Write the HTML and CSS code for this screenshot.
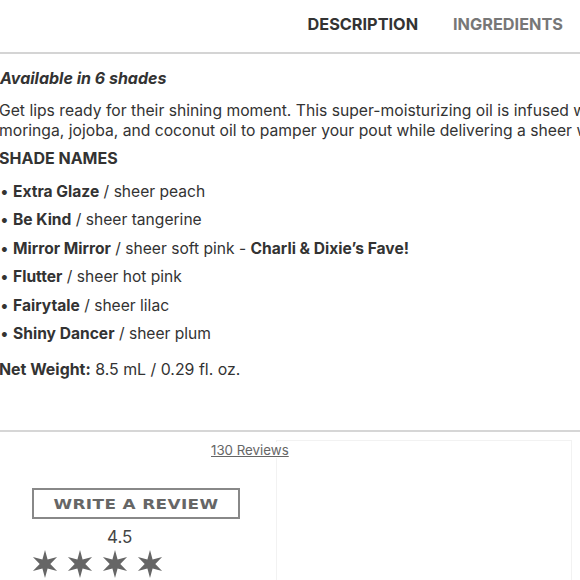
FILE: index.html
```html
<!DOCTYPE html>
<html>
<head>
<meta charset="utf-8">
<link rel="stylesheet" href="styles.css">
</head>
<body>
<nav class="tabs">
  <span class="tab active">DESCRIPTION</span>
  <span class="tab">INGREDIENTS</span>
</nav>
<section class="desc">
  <h2 class="avail">Available in 6 shades</h2>
  <p class="intro">Get lips ready for their shining moment. This super-moisturizing oil is infused with<br>moringa, jojoba, and coconut oil to pamper your pout while delivering a sheer wash of color.</p>
  <h3 class="shades">SHADE NAMES</h3>
  <ul class="list">
    <li><b>Extra Glaze</b> / sheer peach</li>
    <li><b>Be Kind</b> / sheer tangerine</li>
    <li><b>Mirror Mirror</b> / sheer soft pink - <b>Charli &amp; Dixie’s Fave!</b></li>
    <li><b>Flutter</b> / sheer hot pink</li>
    <li><b>Fairytale</b> / sheer lilac</li>
    <li><b>Shiny Dancer</b> / sheer plum</li>
  </ul>
  <p class="weight"><b>Net Weight:</b> 8.5 mL / 0.29 fl. oz.</p>
</section>
<section class="reviews">
  <div class="left">
    <div class="count"><a>130 Reviews</a></div>
    <button class="write"><span>WRITE A REVIEW</span></button>
    <div class="score">4.5</div>
    <div class="stars">
      <svg viewBox="0 0 28 28"><polygon points="14,0 16.6,9.5 26.1,7 19.3,14 26.1,21 16.6,18.5 14,28 11.4,18.5 1.9,21 8.7,14 1.9,7 11.4,9.5"/></svg>
      <svg viewBox="0 0 28 28"><polygon points="14,0 16.6,9.5 26.1,7 19.3,14 26.1,21 16.6,18.5 14,28 11.4,18.5 1.9,21 8.7,14 1.9,7 11.4,9.5"/></svg>
      <svg viewBox="0 0 28 28"><polygon points="14,0 16.6,9.5 26.1,7 19.3,14 26.1,21 16.6,18.5 14,28 11.4,18.5 1.9,21 8.7,14 1.9,7 11.4,9.5"/></svg>
      <svg viewBox="0 0 28 28"><polygon points="14,0 16.6,9.5 26.1,7 19.3,14 26.1,21 16.6,18.5 14,28 11.4,18.5 1.9,21 8.7,14 1.9,7 11.4,9.5"/></svg>
    </div>
  </div>
  <div class="right"></div>
</section>
</body>
</html>
```
FILE: styles.css
```css
html, body {
  margin: 0;
  padding: 0;
  background: #fff;
  overflow: hidden;
  width: 580px;
  height: 580px;
}
body {
  font-family: Inter, "Liberation Sans", sans-serif;
  color: #333;
}
.tabs {
  display: flex;
  justify-content: flex-end;
  align-items: center;
  gap: 35px;
  padding-right: 17px;
  padding-bottom: 4px;
  height: 54px;
  box-sizing: border-box;
  border-bottom: 2px solid #d4d4d4;
}
.tab {
  font-size: 16.3px;
  font-weight: 700;
  color: #777;
}
.tab.active {
  color: #333;
}
.avail {
  margin: 14px 0 0 0;
  font-size: 16px;
  line-height: 20px;
  font-style: italic;
  font-weight: 700;
}
.intro {
  margin: 12.5px 0 0 -1px;
  font-size: 15.7px;
  line-height: 20px;
  white-space: nowrap;
}
.shades {
  margin: 7px 0 0 -1px;
  font-size: 16px;
  line-height: 20px;
  font-weight: 700;
}
.list {
  list-style: none;
  margin: 10px 0 0 0;
  padding: 0 0 0 13px;
}
.list li {
  font-size: 15.6px;
  line-height: 28.6px;
  white-space: nowrap;
}
.list li::before {
  content: "•";
  display: inline-block;
  width: 13px;
  margin-left: -13px;
}
.weight {
  margin: 11px 0 0 -1px;
  font-size: 15.9px;
  line-height: 20px;
}
.reviews {
  margin-top: 50px;
  border-top: 2px solid #d6d6d6;
  display: flex;
  padding-top: 8px;
}
.left {
  width: 277px;
  flex: none;
}
.count {
  position: relative;
  z-index: 1;
  width: 80px;
  margin: 2px 0 0 211px;
  font-size: 13.3px;
  line-height: 16px;
  color: #666;
  background: #fff;
  white-space: nowrap;
}
.count a {
  text-decoration: underline;
}
.write {
  display: flex;
  align-items: center;
  justify-content: center;
  width: 208px;
  height: 31px;
  margin: 30px 0 0 32px;
  padding: 0;
  background: #fff;
  border: 2px solid #888;
  color: #666;
  font-family: "DejaVu Sans", sans-serif;
  font-weight: 700;
  font-size: 13.5px;
  letter-spacing: 0.3px;
}
.write span {
  display: inline-block;
  transform: scale(1.25, 1);
}
.score {
  margin: 8px 0 0 107px;
  font-size: 17px;
  line-height: 20px;
  color: #444;
}
.stars {
  display: flex;
  gap: 7px;
  margin: 3px 0 0 31px;
}
.stars svg {
  width: 28px;
  height: 28px;
  fill: #666;
}
.right {
  width: 296px;
  height: 200px;
  border: 1px solid #f2f2f2;
  box-sizing: border-box;
  margin-left: -1px;
}
```
